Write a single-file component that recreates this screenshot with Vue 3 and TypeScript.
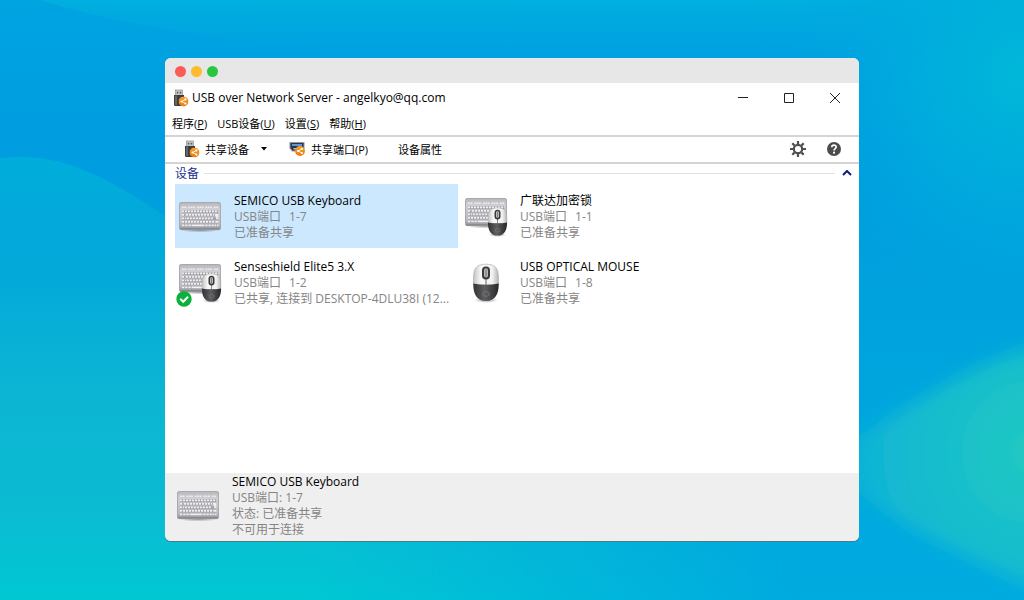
<script setup lang="ts">
import { ref, computed } from 'vue'

type DeviceIcon = 'keyboard' | 'combo' | 'mouse'

interface Device {
  id: number
  name: string
  port: string
  status: string
  icon: DeviceIcon
  connected: boolean
}

const menus = [
  { label: '程序', key: 'P' },
  { label: 'USB设备', key: 'U' },
  { label: '设置', key: 'S' },
  { label: '帮助', key: 'H' },
]

const devices: Device[] = [
  { id: 1, name: 'SEMICO USB Keyboard', port: '1-7', status: '已准备共享', icon: 'keyboard', connected: false },
  { id: 2, name: '广联达加密锁', port: '1-1', status: '已准备共享', icon: 'combo', connected: false },
  { id: 3, name: 'Senseshield Elite5 3.X', port: '1-2', status: '已共享, 连接到 DESKTOP-4DLU38I (12...', icon: 'combo', connected: true },
  { id: 4, name: 'USB OPTICAL MOUSE', port: '1-8', status: '已准备共享', icon: 'mouse', connected: false },
]

const selectedId = ref(1)
const expanded = ref(true)
const selected = computed(() => devices.find((d) => d.id === selectedId.value) ?? devices[0])
</script>

<template>
  <div class="desktop">
    <svg class="wallpaper" viewBox="0 0 1024 600" preserveAspectRatio="none" aria-hidden="true">
      <defs>
        <linearGradient id="w-base" x1="0" y1="0" x2="0" y2="1">
          <stop offset="0" stop-color="#00a4e1" />
          <stop offset="0.25" stop-color="#009de0" />
          <stop offset="0.5" stop-color="#00a2dd" />
          <stop offset="1" stop-color="#00abe0" />
        </linearGradient>
        <linearGradient id="w-left" x1="0" y1="157" x2="0" y2="600" gradientUnits="userSpaceOnUse">
          <stop offset="0" stop-color="#00aeda" />
          <stop offset="0.15" stop-color="#02a8da" />
          <stop offset="0.3" stop-color="#04abd9" />
          <stop offset="0.55" stop-color="#0cb6d3" />
          <stop offset="0.8" stop-color="#0bbbd2" />
          <stop offset="1" stop-color="#00c8d3" />
        </linearGradient>
        <linearGradient id="w-fade" x1="0" y1="0" x2="1024" y2="0" gradientUnits="userSpaceOnUse">
          <stop offset="0.3" stop-color="#fff" />
          <stop offset="0.78" stop-color="#fff" stop-opacity="0" />
        </linearGradient>
        <mask id="w-mask"><rect width="1024" height="600" fill="url(#w-fade)" /></mask>
        <radialGradient id="w-top" cx="1024" cy="75" r="240" gradientUnits="userSpaceOnUse">
          <stop offset="0" stop-color="#00b7d8" />
          <stop offset="0.4" stop-color="#00afdc" stop-opacity="0.85" />
          <stop offset="1" stop-color="#00a4df" stop-opacity="0" />
        </radialGradient>
        <linearGradient id="w-edge" x1="0" y1="0" x2="0" y2="60" gradientUnits="userSpaceOnUse">
          <stop offset="0" stop-color="#00b0df" />
          <stop offset="1" stop-color="#00a4df" stop-opacity="0" />
        </linearGradient>
        <radialGradient id="w-right" cx="1034" cy="452" r="220" gradientUnits="userSpaceOnUse">
          <stop offset="0" stop-color="#22c9c1" />
          <stop offset="0.35" stop-color="#19c0ca" />
          <stop offset="0.75" stop-color="#10b6d4" />
          <stop offset="1" stop-color="#06aadc" stop-opacity="0" />
        </radialGradient>
        <filter id="w-soft" x="-20%" y="-20%" width="140%" height="140%"><feGaussianBlur stdDeviation="9" /></filter>
      </defs>
      <rect width="1024" height="600" fill="url(#w-base)" />
      <path d="M40 0H1024V60H500Q200 50 40 0z" fill="url(#w-edge)" />
      <rect x="600" width="424" height="320" fill="url(#w-top)" />
      <path d="M0 158C50 153 90 165 165 216C350 340 600 420 1024 480V600H0z" fill="url(#w-left)" mask="url(#w-mask)" />
      <path d="M1060 340C960 360 900 420 830 450C840 500 930 540 1060 600z" fill="url(#w-right)" filter="url(#w-soft)" />
    </svg>
    <svg class="defs" aria-hidden="true">
      <defs>
        <linearGradient id="g-body" x1="0" y1="0" x2="0" y2="1">
          <stop offset="0" stop-color="#b6b6ba" />
          <stop offset="0.25" stop-color="#cfcfd3" />
          <stop offset="0.8" stop-color="#bcbcc0" />
          <stop offset="1" stop-color="#8e8e94" />
        </linearGradient>
        <linearGradient id="g-white" x1="0" y1="0" x2="1" y2="0">
          <stop offset="0" stop-color="#c4c4c6" />
          <stop offset="0.3" stop-color="#f8f8f8" />
          <stop offset="0.75" stop-color="#f2f2f2" />
          <stop offset="1" stop-color="#b4b4b6" />
        </linearGradient>
        <linearGradient id="g-dark" x1="0" y1="0" x2="1" y2="0">
          <stop offset="0" stop-color="#333335" />
          <stop offset="0.45" stop-color="#5e5e60" />
          <stop offset="1" stop-color="#262628" />
        </linearGradient>
        <linearGradient id="g-orange" x1="0" y1="0" x2="0" y2="1">
          <stop offset="0" stop-color="#f9a030" />
          <stop offset="1" stop-color="#ea7c08" />
        </linearGradient>
        <radialGradient id="g-shadow">
          <stop offset="0" stop-color="#000" stop-opacity="0.4" />
          <stop offset="1" stop-color="#000" stop-opacity="0" />
        </radialGradient>
      </defs>
      <symbol id="s-keyboard" viewBox="0 0 44 32">
        <ellipse cx="22" cy="29" rx="21" ry="2.5" fill="url(#g-shadow)" />
        <rect x="1" y="1" width="42" height="28" rx="2.5" fill="url(#g-body)" />
        <rect x="1.5" y="1.5" width="41" height="27" rx="2" fill="none" stroke="#a3a3a9" stroke-width="0.8" />
        <path d="M2.5 27.8h39" stroke="#85858b" stroke-width="1.2" />
        <path d="M4 6.2h5M10.5 6.2h7M19 6.2h7M27.5 6.2h7M36 6.2h4.5" stroke="#ededf0" stroke-width="1.4" stroke-dasharray="1.7 0.6" />
        <g stroke="#a2a2a8" stroke-width="2.6">
          <path d="M4 10.6h36.5M4 14.1h36.5M4 17.6h36.5M4 21.1h36.5M4 24.6h36.5" />
        </g>
        <g stroke="#f0f0f2" stroke-width="1.8">
          <path d="M4 10.3h36.5" stroke-dasharray="2.1 0.9" />
          <path d="M4 13.8h3.2M7.9 13.8h28" stroke-dasharray="2.1 0.9" />
          <path d="M4 17.3h4M8.8 17.3h27" stroke-dasharray="2.1 0.9" />
          <path d="M4 20.8h32.5" stroke-dasharray="2.1 0.9" />
          <path d="M4 24.3h2.4M7.2 24.3h2.4M10.4 24.3h2.4M13.6 24.3h12.8M27.2 24.3h2.4M30.4 24.3h2.4M33.6 24.3h2.2M36.5 24.3h1.7M38.9 24.3h1.6" />
          <path d="M36.8 13.8h3.7M37.6 15.4h2.9M38 17.3h2.5M37.3 20.8h3.2" />
        </g>
      </symbol>
      <symbol id="s-mouse" viewBox="0 0 28 40">
        <ellipse cx="14" cy="37" rx="12" ry="3" fill="url(#g-shadow)" />
        <path d="M1.5 18C1.3 7 2.500 1.2 14 1.2S26.700 7 26.500 18v4H1.500z" fill="url(#g-white)" stroke="#a8a8aa" stroke-width="0.6" />
        <path d="M1.300 20.500Q14 23 26.700 20.500C27 31 23 38 14 38S1 31 1.300 20.500z" fill="url(#g-dark)" />
        <path d="M14 14v8" stroke="#66666a" stroke-width="1" />
        <rect x="10" y="3.500" width="8" height="13" rx="4" fill="#39393b" />
        <rect x="12" y="5.200" width="4" height="9.200" rx="2" fill="#b9b9bb" />
        <path d="M14 6.500v7" stroke="#6d6d70" stroke-width="1" />
        <ellipse cx="14" cy="31" rx="3.400" ry="2.300" fill="none" stroke="#7c7c80" stroke-width="0.8" />
      </symbol>
      <symbol id="s-share" viewBox="0 0 10 10">
        <circle cx="5" cy="5" r="5" fill="url(#g-orange)" />
        <path d="M7 2.900L3.200 5L7 7.100" fill="none" stroke="#fff" stroke-width="0.9" />
        <circle cx="6.900" cy="2.900" r="1.100" fill="#fff" />
        <circle cx="3.100" cy="5" r="1.100" fill="#fff" />
        <circle cx="6.900" cy="7.100" r="1.100" fill="#fff" />
      </symbol>
      <symbol id="s-usb" viewBox="0 0 16 18">
        <rect x="2.500" y="1" width="7" height="6" fill="#c3c6c9" stroke="#9a9da0" stroke-width="0.8" />
        <rect x="3.800" y="2.800" width="1.500" height="1.700" fill="#5a5d60" />
        <rect x="6.700" y="2.800" width="1.500" height="1.700" fill="#5a5d60" />
        <path d="M1 6h10v9.500q0 1.500-1.500 1.500h-7Q1 17 1 15.500z" fill="#3b3d3f" />
        <path d="M2 6.500h2v9.500H2z" fill="#65686a" />
        <use href="#s-share" x="5.500" y="7.500" width="10" height="10" />
      </symbol>
      <symbol id="s-port" viewBox="0 0 17 16">
        <path d="M0.500 1h15v6.500l-2.500 3H3l-2.500-3z" fill="#8e969e" />
        <path d="M1.500 2h13v4.800l-2 2.700H3.500l-2-2.700z" fill="#2b3745" />
        <path d="M3 3h10v2H3z" fill="#5b9ad6" />
        <path d="M4.500 7h5v1.500h-5z" fill="#b8c0c8" />
        <use href="#s-share" x="6" y="5" width="10" height="10" />
      </symbol>
    </svg>

    <main class="window">
      <div class="mac-bar">
        <button class="dot red" aria-label="关闭窗口"></button>
        <button class="dot yellow" aria-label="最小化窗口"></button>
        <button class="dot green" aria-label="缩放窗口"></button>
      </div>

      <header class="title-bar">
        <svg class="usb-icon" aria-hidden="true"><use href="#s-usb" /></svg>
        <h1>USB over Network Server - angelkyo@qq.com</h1>
        <div class="controls">
          <button aria-label="最小化"><svg viewBox="0 0 12 12"><path d="M1 5.500h10" /></svg></button>
          <button aria-label="最大化"><svg viewBox="0 0 12 12"><path d="M1.500 1.500h9v9h-9z" /></svg></button>
          <button aria-label="关闭"><svg viewBox="0 0 12 12"><path d="M1 1l10 10M11 1L1 11" /></svg></button>
        </div>
      </header>

      <nav class="menu-bar">
        <button v-for="m in menus" :key="m.key">{{ m.label }}(<u>{{ m.key }}</u>)</button>
      </nav>

      <div class="toolbar" role="toolbar">
        <button class="tool">
          <svg class="usb-icon" aria-hidden="true"><use href="#s-usb" /></svg>
          <span>共享设备</span>
          <svg class="arrow" viewBox="0 0 6 4" aria-hidden="true"><path d="M0 0h6L3 3.500z" /></svg>
        </button>
        <button class="tool">
          <svg class="port-icon" aria-hidden="true"><use href="#s-port" /></svg>
          <span>共享端口(P)</span>
        </button>
        <button class="tool">设备属性</button>
        <div class="tool-right">
          <button aria-label="设置">
            <svg viewBox="-8 -8 16 16">
              <circle r="4.200" fill="none" stroke="#505050" stroke-width="2.200" />
              <g stroke="#505050" stroke-width="2.200">
                <path d="M0-5v-3M0 5v3M-5 0h-3M5 0h3M-3.600-3.600L-5.700-5.700M3.600 3.600L5.700 5.700M-3.600 3.600L-5.700 5.700M3.600-3.600L5.700-5.700" />
              </g>
            </svg>
          </button>
          <button aria-label="帮助">
            <svg viewBox="-8 -8 16 16">
              <circle r="7" fill="#4c4c4c" />
              <path d="M-2.200-1.700C-2.200-4.800 2.300-4.600 2.200-1.900C2.200-.4 0-.3 0 1.600" fill="none" stroke="#fff" stroke-width="1.700" />
              <rect x="-1" y="2.700" width="2" height="1.900" fill="#fff" />
            </svg>
          </button>
        </div>
      </div>

      <section class="content">
        <button class="group" :aria-expanded="expanded" @click="expanded = !expanded">
          <span>设备</span>
          <i class="rule"></i>
          <svg viewBox="0 0 10 6" :class="{ folded: !expanded }" aria-hidden="true"><path d="M1 5l4-4l4 4" /></svg>
        </button>
        <div v-if="expanded" class="devices">
          <button
            v-for="d in devices"
            :key="d.id"
            class="device"
            :class="{ selected: d.id === selectedId }"
            :aria-pressed="d.id === selectedId"
            @click="selectedId = d.id"
          >
            <span class="pic" :class="d.icon">
              <svg v-if="d.icon !== 'mouse'" class="kb"><use href="#s-keyboard" /></svg>
              <svg v-if="d.icon !== 'keyboard'" class="ms"><use href="#s-mouse" /></svg>
              <svg v-if="d.connected" class="badge" viewBox="0 0 16 16">
                <circle cx="8" cy="8" r="7.700" fill="#0bb13c" />
                <path d="M4.200 7.800l3 3L12 5.800" fill="none" stroke="#fff" stroke-width="2" />
              </svg>
            </span>
            <span class="info">
              <span class="name">{{ d.name }}</span>
              <span class="line port"><span>USB端口</span><span>{{ d.port }}</span></span>
              <span class="line">{{ d.status }}</span>
            </span>
          </button>
        </div>
      </section>

      <footer class="details">
        <span class="pic" :class="selected.icon">
          <svg v-if="selected.icon !== 'mouse'" class="kb"><use href="#s-keyboard" /></svg>
          <svg v-if="selected.icon !== 'keyboard'" class="ms"><use href="#s-mouse" /></svg>
        </span>
        <div class="info">
          <span class="name">{{ selected.name }}</span>
          <span class="line">USB端口: {{ selected.port }}</span>
          <span class="line">状态: {{ selected.status }}</span>
          <span class="line">不可用于连接</span>
        </div>
      </footer>
    </main>
  </div>
</template>

<style>
body {
  margin: 0;
}
</style>

<style scoped>
.desktop {
  position: relative;
  box-sizing: border-box;
  min-height: 100vh;
  padding: 58px 165px 59px;
  display: flex;
  overflow: hidden;
  font-family: "Open Sans", "Noto Sans CJK SC", sans-serif;
  font-size: 12px;
  color: #000;
  background: #00a2df;
}
.wallpaper {
  position: absolute;
  inset: 0;
  width: 100%;
  height: 100%;
}
.defs {
  position: absolute;
  width: 0;
  height: 0;
}
button {
  margin: 0;
  padding: 0;
  border: 0;
  background: none;
  font: inherit;
  color: inherit;
  text-align: left;
}
svg {
  display: block;
  flex: none;
}
.window {
  position: relative;
  flex: 1;
  min-width: 0;
  display: flex;
  flex-direction: column;
  border-radius: 6px;
  overflow: hidden;
  background: #fff;
  box-shadow: 0 1px 0 #4a7c84;
}
.mac-bar {
  display: flex;
  align-items: center;
  gap: 5px;
  height: 25px;
  padding: 1px 10px 0;
  box-sizing: border-box;
  background: #e7e7e7;
}
.dot {
  width: 11px;
  height: 11px;
  border-radius: 50%;
}
.red { background: #fc5b57; }
.yellow { background: #fdbb2d; }
.green { background: #27c840; }

.title-bar {
  display: flex;
  align-items: center;
  height: 29px;
  padding: 0 1px 0 8px;
  gap: 3px;
}
.usb-icon {
  width: 16px;
  height: 18px;
}
h1 {
  margin: 0;
  font-size: 12px;
  font-weight: 400;
  line-height: 16px;
}
.controls {
  display: flex;
  margin-left: auto;
}
.controls button {
  width: 46px;
  height: 28px;
  display: grid;
  place-items: center;
}
.controls svg {
  width: 12px;
  height: 12px;
  fill: none;
  stroke: #222;
}
.menu-bar {
  display: flex;
  align-items: center;
  gap: 10px;
  height: 21px;
  padding: 0 7px 2px;
  font-size: 11px;
}
u {
  text-underline-offset: 1px;
}
.toolbar {
  display: flex;
  align-items: center;
  height: 24px;
  padding: 0 17px 1px 19px;
  border-top: 2px solid #d4d4d4;
  border-bottom: 2px solid #d4d4d4;
  font-size: 11px;
}
.tool {
  display: flex;
  align-items: center;
  gap: 5px;
  margin-right: 30px;
}
.tool:first-child {
  margin-right: 22px;
}
.arrow {
  width: 6px;
  height: 4px;
  margin-left: 7px;
}
.port-icon {
  width: 17px;
  height: 16px;
}
.tool-right {
  display: flex;
  gap: 20px;
  margin-left: auto;
}
.tool-right svg {
  width: 16px;
  height: 16px;
}
.content {
  flex: 1;
  padding: 0 5px 0 10px;
}
.group {
  display: flex;
  align-items: center;
  gap: 5px;
  width: 100%;
  height: 20px;
  padding-bottom: 2px;
  color: #1b2f8c;
}
.rule {
  flex: 1;
  height: 1px;
  margin-right: 2px;
  background: #dfe0e8;
}
.group svg {
  width: 10px;
  height: 6px;
  margin-right: 2px;
  fill: none;
  stroke: #0a1c86;
  stroke-width: 2;
}
.group .folded {
  transform: rotate(180deg);
}
.devices {
  display: grid;
  grid-template-columns: repeat(auto-fill, 283px);
  gap: 2px 3px;
}
.device {
  display: flex;
  align-items: center;
  gap: 12px;
  box-sizing: border-box;
  height: 64px;
  padding: 2px 4px 0 3px;
  min-width: 0;
}
.selected {
  background: #cce8ff;
}
.pic {
  flex: none;
  position: relative;
  display: grid;
  align-items: center;
  width: 44px;
  height: 40px;
}
.kb {
  width: 44px;
  height: 32px;
}
.combo {
  align-items: start;
}
.ms {
  width: 28px;
  height: 40px;
}
.mouse {
  justify-items: center;
}
.combo .ms {
  position: absolute;
  right: 0;
  bottom: 0;
  width: 21px;
  height: 30px;
}
.badge {
  position: absolute;
  left: -2px;
  bottom: -4px;
  width: 16px;
  height: 16px;
}
.info {
  display: flex;
  flex-direction: column;
  min-width: 0;
  line-height: 16px;
}
.line {
  color: #858585;
  white-space: nowrap;
}
.port {
  display: flex;
  gap: 8px;
}
.details {
  display: flex;
  align-items: center;
  gap: 12px;
  padding: 1px 11px 3px;
  background: #efefef;
}
</style>
